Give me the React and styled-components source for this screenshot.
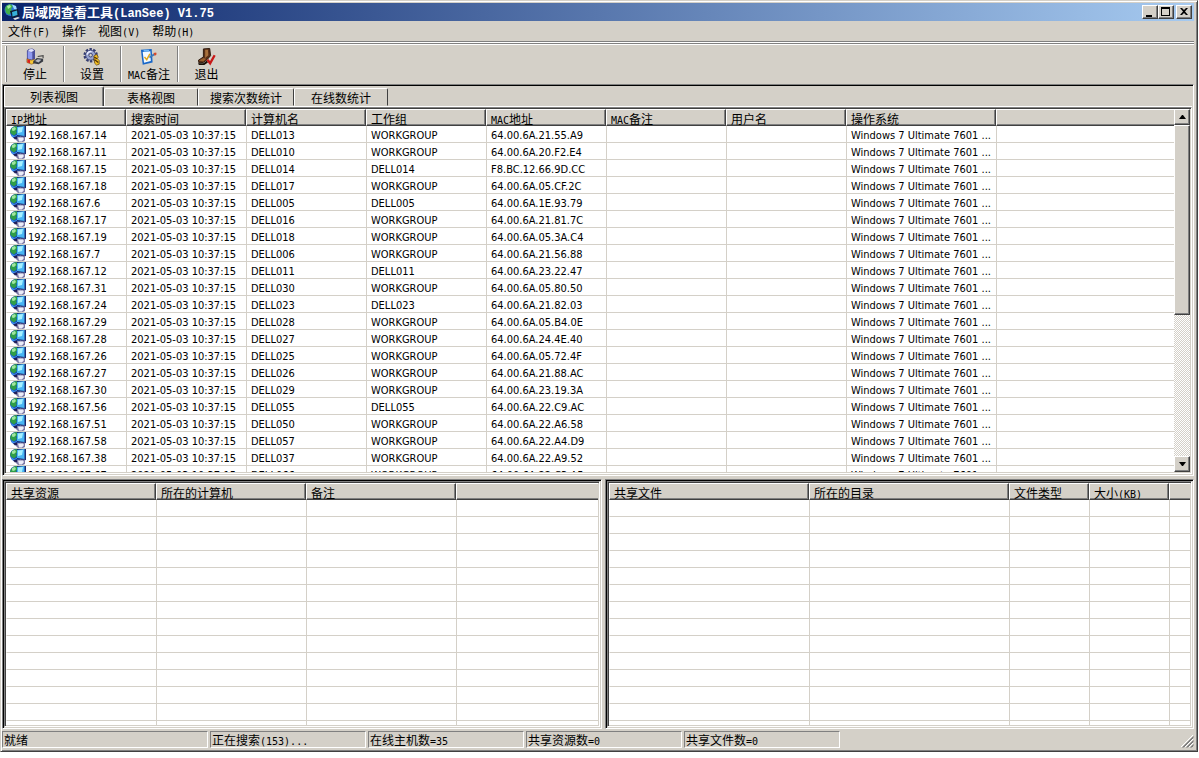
import React from 'react';
import styled, { createGlobalStyle, css } from 'styled-components';

const GlobalStyle = createGlobalStyle`
  * {
    box-sizing: border-box;
  }
  body {
    margin: 0;
    background: #fff;
    color: #000;
    font-family: 'Noto Sans CJK SC', sans-serif;
    font-size: 12px;
  }
  button {
    margin: 0;
    padding: 0;
    border: 0;
    background: none;
    color: inherit;
    font: inherit;
  }
`;

const raised = css`
  border: 1px solid;
  border-color: #fff #404040 #404040 #fff;
  box-shadow: inset -1px -1px #808080;
  background: #d4d0c8;
`;

const sunken = css`
  border: 1px solid;
  border-color: #808080 #fff #fff #808080;
  box-shadow: inset 1px 1px ${(props) => (props.$dark ? '#000' : '#404040')}, inset -1px -1px #d4d0c8;
  padding: 1px;
`;

const hosts = [
  ['14', 'DELL013', 'WORKGROUP', '64.00.6A.21.55.A9'],
  ['11', 'DELL010', 'WORKGROUP', '64.00.6A.20.F2.E4'],
  ['15', 'DELL014', 'DELL014', 'F8.BC.12.66.9D.CC'],
  ['18', 'DELL017', 'WORKGROUP', '64.00.6A.05.CF.2C'],
  ['6', 'DELL005', 'DELL005', '64.00.6A.1E.93.79'],
  ['17', 'DELL016', 'WORKGROUP', '64.00.6A.21.81.7C'],
  ['19', 'DELL018', 'WORKGROUP', '64.00.6A.05.3A.C4'],
  ['7', 'DELL006', 'WORKGROUP', '64.00.6A.21.56.88'],
  ['12', 'DELL011', 'DELL011', '64.00.6A.23.22.47'],
  ['31', 'DELL030', 'WORKGROUP', '64.00.6A.05.80.50'],
  ['24', 'DELL023', 'DELL023', '64.00.6A.21.82.03'],
  ['29', 'DELL028', 'WORKGROUP', '64.00.6A.05.B4.0E'],
  ['28', 'DELL027', 'WORKGROUP', '64.00.6A.24.4E.40'],
  ['26', 'DELL025', 'WORKGROUP', '64.00.6A.05.72.4F'],
  ['27', 'DELL026', 'WORKGROUP', '64.00.6A.21.88.AC'],
  ['30', 'DELL029', 'WORKGROUP', '64.00.6A.23.19.3A'],
  ['56', 'DELL055', 'DELL055', '64.00.6A.22.C9.AC'],
  ['51', 'DELL050', 'WORKGROUP', '64.00.6A.22.A6.58'],
  ['58', 'DELL057', 'WORKGROUP', '64.00.6A.22.A4.D9'],
  ['38', 'DELL037', 'WORKGROUP', '64.00.6A.22.A9.52'],
  ['67', 'DELL066', 'WORKGROUP', '64.00.6A.22.C3.A5'],
];

const hostColumns = [
  ['IP地址', 120],
  ['搜索时间', 120],
  ['计算机名', 120],
  ['工作组', 120],
  ['MAC地址', 120],
  ['MAC备注', 120],
  ['用户名', 120],
  ['操作系统', 150],
  ['', null],
];

const shareColumns = [['共享资源', 150], ['所在的计算机', 150], ['备注', 150], ['', null]];

const fileColumns = [
  ['共享文件', 200],
  ['所在的目录', 200],
  ['文件类型', 80],
  ['大小(KB)', 80],
  ['', null],
];

const hostRows = hosts.map(([ip, name, group, mac]) => [
  `192.168.167.${ip}`,
  '2021-05-03 10:37:15',
  name,
  group,
  mac,
  '',
  '',
  'Windows 7 Ultimate 7601 ...',
  '',
]);

const blankRows = (columns) => Array.from({ length: 15 }, () => columns.map(() => ''));

// Latin runs are set in a half-width face beside the Chinese text
const Label = ({ text }) =>
  text.split(/([\x20-\x7e]+)/).map((part, i) => (i % 2 ? <Latin key={i}>{part}</Latin> : part));

const HostIcon = () => (
  <svg width='16' height='16' viewBox='0 0 16 16' aria-hidden='true'>
    <circle cx='6' cy='6' r='6' fill='#1450b8' />
    <path d='M1 3 4 .5 8 0v3L6 5l1 2-3 2.500L1.500 8 0 6z' fill='#2f9e48' />
    <path d='M2 2 5 1l1 2-2 2-2-.5z' fill='#9fe6a0' />
    <path d='M1 8l3 2 3-1v2l-3 1-2-1z' fill='#3a8cf0' />
    <path d='M7 0h9v11l-2 .5-7-1.500z' fill='#182870' />
    <path d='M7 1 14.500 0v10L7 9z' fill='#48b4f4' />
    <path d='M8 1.500 13 1 12 6 8 7z' fill='#a6f0ff' />
    <path d='M6 11 15 10.500V15l-2 1H8l-2-2z' fill='#7c78a4' />
    <path d='M8 11.500h5l1 1.500-2 2.500H9z' fill='#ececf8' />
    <path d='M3 11.500 7 10v3l-2 .5z' fill='#20205c' />
  </svg>
);

const AppIcon = () => (
  <svg width='16' height='16' viewBox='0 0 16 16' aria-hidden='true'>
    <circle cx='6.500' cy='6' r='6' fill='#2874d0' />
    <path d='M1 5 2 2 6 0l3 2-2 3 1 2-3 4-3-2z' fill='#42b04a' />
    <path d='M3 2l3-1 1 2-3 2z' fill='#a8eca0' />
    <path d='M8 .5 12 2l1 4-3-1z' fill='#9ed8ff' />
    <path d='M6 7 14 5l1.500 7L8 14z' fill='#0c1a30' />
    <path d='M8 8 13 6.500l.5 4.500-5 1.500z' fill='#37b0d8' />
    <path d='M9 14.500 14 13l2 1-5 2z' fill='#e0e0e0' />
  </svg>
);

const StopIcon = () => (
  <svg width='20' height='20' viewBox='0 0 20 20' aria-hidden='true'>
    <path d='M1 3 3 1l4-.5 3 2v10l-4 1-5-1z' fill='#4c509c' />
    <path d='M2 4 7 5v8l-5-1z' fill='#8f9af0' />
    <path d='M2 3.500 4 1.500l3-.5 2 2-3 1.500z' fill='#e2e4ff' />
    <path d='M1 12l5 1.500 3-1V17l-3 1-5-2z' fill='#f4c838' stroke='#704010' strokeWidth='.6' />
    <path d='M1.500 12.500l3 1V17l-3-1z' fill='#d82020' />
    <path d='M8 15 12 11l7 1v3l-5 3-6-1z' fill='#383c44' />
    <path d='M10 14.500l3-2 4 .5-3 3z' fill='#b8bcc4' />
    <path d='M13 9.500l6-1v3' fill='none' stroke='#444' strokeWidth='1.200' />
  </svg>
);

const GearIcon = () => (
  <svg width='20' height='20' viewBox='0 0 20 20' aria-hidden='true'>
    <circle cx='8.500' cy='8' r='6.500' fill='none' stroke='#343c70' strokeWidth='3' strokeDasharray='2.600 1.480' />
    <circle cx='8.500' cy='8' r='5.500' fill='#98a4d0' stroke='#404880' />
    <path d='M4.500 7.500a4 4 0 0 1 5-3.500' fill='none' stroke='#eceeff' strokeWidth='1.600' />
    <circle cx='8.500' cy='8' r='2' fill='#d4d0c8' stroke='#343c70' />
    <path d='M12 9l3-2 2 3-1 2 2 2v4l-3 1-2-2z' fill='#f4c020' stroke='#604010' strokeWidth='.8' />
    <path d='M12.500 10l3 2M13 13l4 3' stroke='#503008' strokeWidth='1.400' />
  </svg>
);

const NoteIcon = () => (
  <svg width='20' height='20' viewBox='0 0 20 20' aria-hidden='true'>
    <path d='M1 2 13 1l1 15-11 2.500z' fill='#1766c8' />
    <path d='M3 4.500 11.500 3.500 12 14.500l-7.500 2z' fill='#f4faff' />
    <path d='M4 2h6v2H4z' fill='#70b8f8' />
    <path d='M5 10l2.500 3L11 6.500' fill='none' stroke='#e0a818' strokeWidth='1.600' />
    <path d='M10.500 10.500 16 7' stroke='#3c78b8' strokeWidth='2' />
    <path d='M15 5.500l3-.5.5 2-2 2z' fill='#d84828' />
  </svg>
);

const ExitIcon = () => (
  <svg width='20' height='20' viewBox='0 0 20 20' aria-hidden='true'>
    <path d='M6 1 13 .5l1 8-4 4.500-4 3-5 .5-.5-3L6 10z' fill='#5a3018' stroke='#281408' />
    <path d='M8 2h3l.5 6L8 11z' fill='#a8703c' />
    <path d='M1 14l5-3 3 1-3 3z' fill='#986030' />
    <path d='M0 17h6l4-3 1 2-4 3H1z' fill='#181008' />
    <path d='M10.500 13l3 4 5-9' fill='none' stroke='#c81818' strokeWidth='2.600' />
  </svg>
);

const tools = [
  ['停止', StopIcon],
  ['设置', GearIcon],
  ['MAC备注', NoteIcon],
  ['退出', ExitIcon],
];

const ListView = ({ label, columns, rows, icons }) => (
  <Viewport>
    <Table aria-label={label}>
      <colgroup>
        {columns.map(([name, width], i) => (
          <Column key={i} $width={width} />
        ))}
      </colgroup>
      <thead>
        <tr>
          {columns.map(([name], i) => (
            <HeadCell key={i}>
              <Label text={name} />
            </HeadCell>
          ))}
        </tr>
      </thead>
      <tbody>
        {rows.map((row, r) => (
          <tr key={r}>
            {row.map((value, c) =>
              icons && c === 0 ? (
                <Cell key={c}>
                  <HostName>
                    <HostIcon />
                    {value}
                  </HostName>
                </Cell>
              ) : (
                <Cell key={c}>{value}</Cell>
              )
            )}
          </tr>
        ))}
      </tbody>
    </Table>
  </Viewport>
);

const App = () => {
  return (
    <Page>
      <GlobalStyle />
      <Window>
        <TitleBar>
          <AppIcon />
          <Title>
            局域网查看工具<span>(LanSee) V1.75</span>
          </Title>
          <CaptionButton aria-label='最小化'>
            <svg width='14' height='12' viewBox='0 0 14 12'>
              <path d='M3 9h6v2H3z' />
            </svg>
          </CaptionButton>
          <CaptionButton aria-label='最大化'>
            <svg width='14' height='12' viewBox='0 0 14 12'>
              <path d='M2 1h9v9H2zM3 3v6h7V3z' fillRule='evenodd' />
            </svg>
          </CaptionButton>
          <CaptionButton $apart aria-label='关闭'>
            <svg width='14' height='12' viewBox='0 0 14 12'>
              <path d='M3 2h2l2 2 2-2h2L8 5.500 11 9H9L7 7 5 9H3l3-3.500z' />
            </svg>
          </CaptionButton>
        </TitleBar>
        <MenuBar>
          {['文件(F)', '操作', '视图(V)', '帮助(H)'].map((item) => (
            <MenuItem key={item}>
              <Label text={item} />
            </MenuItem>
          ))}
        </MenuBar>
        <ToolBar>
          {tools.map(([name, Icon]) => (
            <ToolButton key={name}>
              <Icon />
              <span>
                <Label text={name} />
              </span>
            </ToolButton>
          ))}
        </ToolBar>
        <Workspace>
          <Pane $dark>
            <Tabs role='tablist'>
              <Tab role='tab' aria-selected='true' $active>列表视图</Tab>
              <Tab role='tab' aria-selected='false'>表格视图</Tab>
              <Tab role='tab' aria-selected='false'>搜索次数统计</Tab>
              <Tab role='tab' aria-selected='false'>在线数统计</Tab>
            </Tabs>
            <ListFrame>
              <ListView label='主机' columns={hostColumns} rows={hostRows} icons />
              <ScrollBar>
                <ScrollButton aria-label='向上滚动'>
                  <svg width='7' height='4' viewBox='0 0 7 4'>
                    <path d='M3 0h1l3 4H0z' />
                  </svg>
                </ScrollButton>
                <Thumb />
                <Track />
                <ScrollButton aria-label='向下滚动'>
                  <svg width='7' height='4' viewBox='0 0 7 4'>
                    <path d='M0 0h7L4 4H3z' />
                  </svg>
                </ScrollButton>
              </ScrollBar>
            </ListFrame>
          </Pane>
          <Split>
            <Pane $dark>
              <ListFrame>
                <ListView label='共享资源' columns={shareColumns} rows={blankRows(shareColumns)} />
              </ListFrame>
            </Pane>
            <Pane $dark>
              <ListFrame>
                <ListView label='共享文件' columns={fileColumns} rows={blankRows(fileColumns)} />
              </ListFrame>
            </Pane>
          </Split>
        </Workspace>
        <StatusBar>
          <StatusCell $wide>就绪</StatusCell>
          {['正在搜索(153)...', '在线主机数=35', '共享资源数=0', '共享文件数=0'].map((text) => (
            <StatusCell key={text}>
              <Label text={text} />
            </StatusCell>
          ))}
          <Grip width='13' height='13' viewBox='0 0 13 13' aria-hidden='true'>
            <path d='M0 12 12 0M4 12l8-8M8 12l4-4' stroke='#fff' />
            <path d='M1.500 12.500l11-11M2.500 12.500l10-10M5.500 12.500l7-7M6.500 12.500l6-6M9.500 12.500l3-3M10.500 12.500l2-2' stroke='#808080' />
          </Grip>
        </StatusBar>
      </Window>
    </Page>
  );
};

const Page = styled.div`
  display: flex;
  height: 100vh;
  padding: 0 1px 6px 0;
`;

const Window = styled.main`
  flex: 1;
  min-width: 0;
  display: flex;
  flex-direction: column;
  padding: 2px 3px 3px 1px;
  border: 1px solid;
  border-color: #d4d0c8 #404040 #404040 #d4d0c8;
  box-shadow: inset 1px 1px #fff, inset -1px -1px #808080;
  background: #d4d0c8;
`;

const TitleBar = styled.header`
  display: flex;
  align-items: center;
  height: 18px;
  padding: 0 2px;
  background: linear-gradient(90deg, #0a246a, #a6caf0);
`;

const Title = styled.h1`
  flex: 1;
  margin: 0 0 0 2px;
  color: #fff;
  font: bold 13px/18px 'Noto Sans CJK SC', sans-serif;
  white-space: nowrap;

  span {
    font: bold 12px/12px 'Liberation Mono', monospace;
  }
`;

const CaptionButton = styled.button`
  ${raised}
  width: 16px;
  height: 14px;
  margin-left: ${(props) => (props.$apart ? '2px' : '0')};

  svg {
    display: block;
  }
`;

const MenuBar = styled.nav`
  display: flex;
  height: 20px;
`;

const MenuItem = styled.button`
  padding: 0 6px;
  line-height: 20px;
`;

const Latin = styled.span`
  font: 10px/1px 'DejaVu Sans Mono', monospace;
`;

const ToolBar = styled.div`
  display: flex;
  height: 43px;
  padding: 4px 0 2px 3px;
  border-top: 1px solid #808080;
  box-shadow: inset 0 1px #fff, inset 0 2px #808080, inset 0 3px #fff;

  &::before {
    content: '';
    border-left: 1px solid #fff;
    border-right: 1px solid #808080;
  }
`;

const ToolButton = styled.button`
  display: flex;
  flex-direction: column;
  align-items: center;
  width: 57px;
  padding-top: 2px;
  line-height: 16px;
  white-space: nowrap;

  &:not(:last-child) {
    border-right: 1px solid #808080;
    box-shadow: 1px 0 #fff;
  }
`;

const Workspace = styled.div`
  flex: 1;
  min-height: 0;
  display: grid;
  grid-template-rows: 392fr 250fr;
  gap: 3px;
`;

const Pane = styled.section`
  ${sunken}
  min-width: 0;
  min-height: 0;
  display: flex;
  flex-direction: column;
`;

const Tabs = styled.div`
  display: flex;
  align-items: flex-end;
  height: 21px;
  border-bottom: 1px solid #fff;
`;

const Tab = styled.button`
  height: 18px;
  min-width: 94px;
  padding: 1px 11px 0;
  border: 1px solid;
  border-color: #fff #404040 transparent #fff;
  border-radius: 2px 2px 0 0;
  line-height: 16px;

  ${(props) =>
    props.$active &&
    css`
      width: 100px;
      height: 20px;
      border-bottom: 0;
      box-shadow: inset -1px 0 #808080;
    `}
`;

const ListFrame = styled.div`
  ${sunken}
  flex: 1;
  min-height: 0;
  display: flex;
  background: #fff;
`;

const Viewport = styled.div`
  flex: 1;
  min-width: 0;
  overflow: hidden;
`;

const Table = styled.table`
  width: 100%;
  table-layout: fixed;
  border-collapse: separate;
  border-spacing: 0;
`;

const Column = styled.col`
  width: ${(props) => (props.$width ? `${props.$width}px` : 'auto')};
`;

const HeadCell = styled.th`
  height: 17px;
  padding: 2px 0 0 4px;
  border: 1px solid;
  border-color: #fff #404040 #404040 #fff;
  box-shadow: inset -1px -1px #808080;
  background: #d4d0c8;
  font-weight: normal;
  line-height: 13px;
  text-align: left;
  white-space: nowrap;
  overflow: hidden;

  &:last-child {
    border-right: 0;
    box-shadow: inset 0 -1px #808080;
  }
`;

const Cell = styled.td`
  height: 17px;
  padding: 3px 0 0 4px;
  border-left: 1px solid #d4d0c8;
  border-bottom: 1px solid #d4d0c8;
  font: 11px/13px 'DejaVu Sans Condensed', 'Roboto', sans-serif;
  white-space: nowrap;
  overflow: hidden;

  &:first-child {
    padding-left: 3px;
    border-left-color: #fff;
  }
`;

const HostName = styled.div`
  display: flex;
  gap: 2px;

  svg {
    flex: none;
    margin-top: -3px;
  }
`;

const ScrollBar = styled.div`
  display: flex;
  flex-direction: column;
  width: 16px;
`;

const ScrollButton = styled.button`
  ${raised}
  display: flex;
  align-items: center;
  justify-content: center;
  height: 16px;
`;

const Thumb = styled.div`
  ${raised}
  flex: 189;
`;

const Track = styled.div`
  flex: 142;
  background: repeating-conic-gradient(#fff 0 25%, #d4d0c8 0 50%) 0 0 / 2px 2px;
`;

const Split = styled.div`
  min-height: 0;
  display: grid;
  grid-template-columns: 600fr 589fr;
  gap: 3px;
`;

const StatusBar = styled.footer`
  display: flex;
  gap: 2px;
  height: 19px;
  padding-top: 2px;
`;

const StatusCell = styled.div`
  width: ${(props) => (props.$wide ? '206px' : '156px')};
  height: 17px;
  padding-left: 1px;
  border: 1px solid;
  border-color: #808080 #fff #fff #808080;
  line-height: 15px;
  white-space: nowrap;
`;

const Grip = styled.svg`
  align-self: flex-end;
  margin-left: auto;
`;

export default App;
